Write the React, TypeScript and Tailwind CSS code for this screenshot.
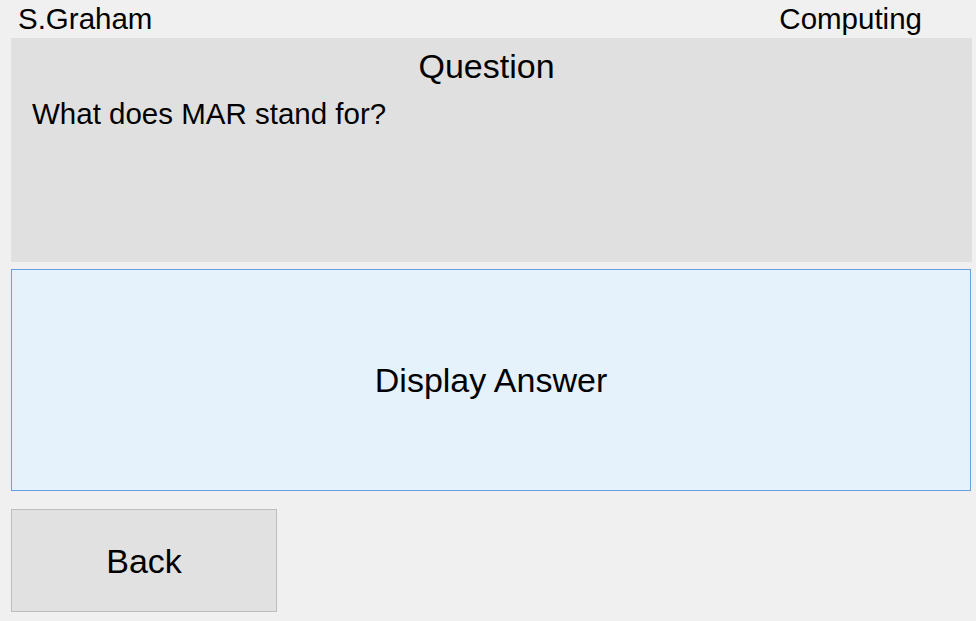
const App = () => {
  return (
    <div
      className="w-[976px] h-[621px] bg-[#f0f0f0] text-black overflow-hidden"
      style={{ fontFamily: '"Liberation Sans", Arial, sans-serif' }}
    >
      <div className="h-[38px] pt-[4px] pl-[18px] pr-[54px] flex justify-between text-[29.5px] leading-[29px]">
        <span>S.Graham</span>
        <span>Computing</span>
      </div>

      <div className="pl-[11px] flex flex-col">
        <div className="w-[961px] h-[224px] bg-[#e0e0e0] pt-[11px]">
          <div className="text-center pr-[10px] text-[34px] leading-[34px]">Question</div>
          <div className="mt-[16px] pl-[21px] text-[29.5px] leading-[30px]">
            What does MAR stand for?
          </div>
        </div>

        <button className="mt-[7px] w-[960px] h-[222px] bg-[#e5f1fb] border border-[#6a9fe3] text-[34px] leading-[34px] flex items-center justify-center">
          Display Answer
        </button>

        <button className="mt-[18px] w-[266px] h-[103px] bg-[#e1e1e1] border border-[#bdbdbd] text-[34px] leading-[34px] flex items-center justify-center">
          Back
        </button>
      </div>
    </div>
  );
};

export default App;
